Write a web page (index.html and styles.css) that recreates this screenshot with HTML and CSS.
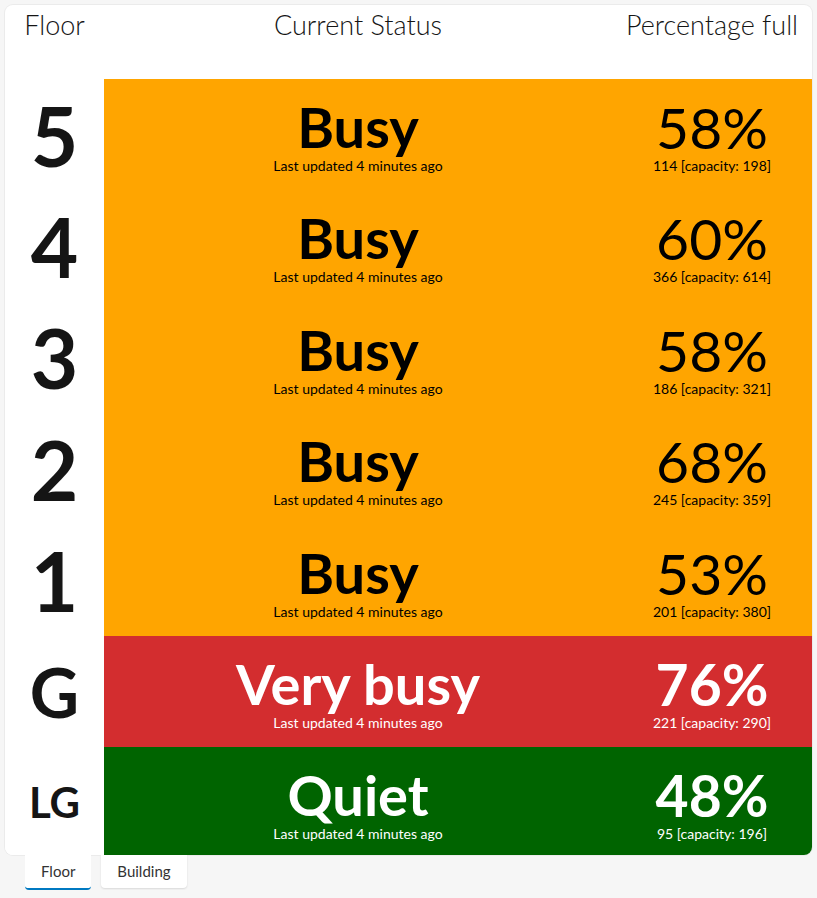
FILE: index.html
```html
<!DOCTYPE html>
<html>
<head>
<meta charset="utf-8">
<link rel="stylesheet" href="styles.css">
</head>
<body>
<div class="card">
  <div class="head">
    <div class="hcell">Floor</div>
    <div class="hcell">Current Status</div>
    <div class="hcell">Percentage full</div>
  </div>
  <div class="rows">
    <div class="row busy">
      <div class="floor">5</div>
      <div class="status"><div class="big">Busy</div><div class="sub">Last updated 4 minutes ago</div></div>
      <div class="pct"><div class="num">58%</div><div class="sub">114 [capacity: 198]</div></div>
    </div>
    <div class="row busy">
      <div class="floor">4</div>
      <div class="status"><div class="big">Busy</div><div class="sub">Last updated 4 minutes ago</div></div>
      <div class="pct"><div class="num">60%</div><div class="sub">366 [capacity: 614]</div></div>
    </div>
    <div class="row busy">
      <div class="floor">3</div>
      <div class="status"><div class="big">Busy</div><div class="sub">Last updated 4 minutes ago</div></div>
      <div class="pct"><div class="num">58%</div><div class="sub">186 [capacity: 321]</div></div>
    </div>
    <div class="row busy">
      <div class="floor">2</div>
      <div class="status"><div class="big">Busy</div><div class="sub">Last updated 4 minutes ago</div></div>
      <div class="pct"><div class="num">68%</div><div class="sub">245 [capacity: 359]</div></div>
    </div>
    <div class="row busy">
      <div class="floor">1</div>
      <div class="status"><div class="big">Busy</div><div class="sub">Last updated 4 minutes ago</div></div>
      <div class="pct"><div class="num">53%</div><div class="sub">201 [capacity: 380]</div></div>
    </div>
    <div class="row vbusy">
      <div class="floor g">G</div>
      <div class="status"><div class="big">Very busy</div><div class="sub">Last updated 4 minutes ago</div></div>
      <div class="pct"><div class="num">76%</div><div class="sub">221 [capacity: 290]</div></div>
    </div>
    <div class="row quiet last">
      <div class="floor lg">LG</div>
      <div class="status"><div class="big">Quiet</div><div class="sub">Last updated 4 minutes ago</div></div>
      <div class="pct"><div class="num">48%</div><div class="sub">95 [capacity: 196]</div></div>
    </div>
  </div>
</div>
<div class="tabs">
  <div class="tab active">Floor</div>
  <div class="tab">Building</div>
</div>
</body>
</html>
```

FILE: styles.css
```css
html, body {
  margin: 0;
  padding: 0;
  background: #f6f6f6;
}
body {
  padding: 5px 5px 0 5px;
  font-family: Lato, "Noto Sans", sans-serif;
  color: #151515;
}
.card {
  width: 807px;
  height: 850px;
  box-sizing: border-box;
  background: #fff;
  border-radius: 8px;
  box-shadow: 0 0 0 1px #ebebeb;
  overflow: hidden;
  display: flex;
  flex-direction: column;
}
.head {
  display: grid;
  grid-template-columns: 99px 508px 200px;
  height: 74px;
  flex: none;
}
.hcell {
  text-align: center;
  font-size: 27px;
  font-weight: 300;
  line-height: 30px;
  padding-top: 5px;
}
.rows {
  flex: 1;
  display: flex;
  flex-direction: column;
}
.row {
  display: grid;
  grid-template-columns: 99px 508px 200px;
  height: 111.4px;
  flex: none;
}
.row.last {
  flex: 1;
  height: auto;
}
.floor {
  background: #fff;
  display: flex;
  align-items: center;
  justify-content: center;
  font-size: 82px;
  font-weight: 700;
  color: #151515;
}
.floor.g {
  font-size: 68px;
}
.floor.lg {
  font-size: 42px;
  padding-top: 2px;
}
.status, .pct {
  display: flex;
  flex-direction: column;
  align-items: center;
}
.status {
  padding-top: 20px;
}
.pct {
  padding-top: 20px;
}
.big {
  font-size: 56px;
  line-height: 56px;
  font-weight: 700;
}
.num {
  font-size: 57px;
  line-height: 57px;
  font-weight: 400;
}
.sub {
  font-size: 14px;
  line-height: 16px;
  margin-top: 3px;
}
.pct .sub {
  margin-top: 2px;
}
.busy .status, .busy .pct {
  background: #ffa500;
  color: #000;
}
.vbusy .status, .vbusy .pct {
  background: #d32d2f;
  color: #fff;
}
.quiet .status, .quiet .pct {
  background: #006400;
  color: #fff;
}
.vbusy .num, .quiet .num {
  font-weight: 700;
}
.tabs {
  display: flex;
  gap: 10px;
  padding-left: 20px;
}
.tab {
  background: #fff;
  font-size: 15px;
  color: #333;
  height: 33px;
  line-height: 33px;
  padding: 0 16px;
  border-radius: 0 0 4px 4px;
  box-shadow: 0 1px 2px rgba(0,0,0,0.12);
}
.tab.active {
  border-bottom: 2px solid #0079c1;
  box-shadow: none;
}
```
